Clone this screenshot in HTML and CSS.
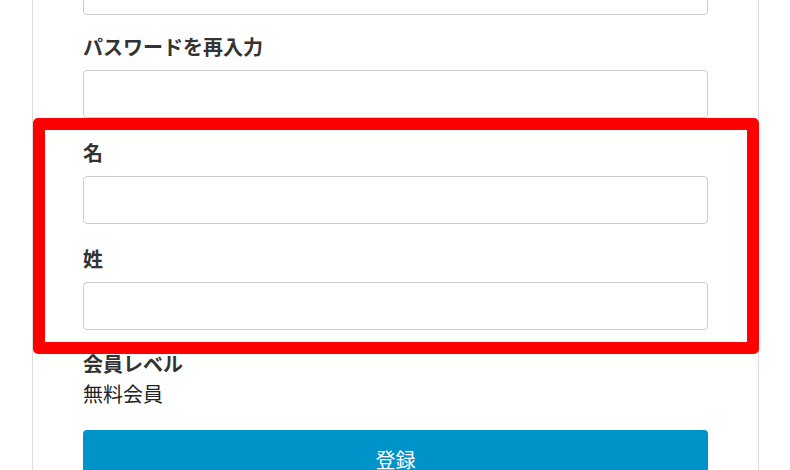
FILE: index.html
```html
<!DOCTYPE html>
<html lang="ja">
<head>
<meta charset="utf-8">
<link rel="stylesheet" href="styles.css">
</head>
<body>
<div class="page">
  <form class="card">
    <div class="group group-first">
      <input class="field" type="password">
    </div>
    <div class="group">
      <label class="label">パスワードを再入力</label>
      <input class="field" type="password">
    </div>
    <div class="group">
      <label class="label">名</label>
      <input class="field" type="text">
    </div>
    <div class="group group-last">
      <label class="label">姓</label>
      <input class="field" type="text">
    </div>
    <div class="group group-info">
      <div class="label">会員レベル</div>
      <div class="value">無料会員</div>
    </div>
    <button class="submit" type="button">登録</button>
  </form>
  <div class="highlight"></div>
</div>
</body>
</html>
```

FILE: styles.css
```css
html, body {
  margin: 0;
  padding: 0;
  background: #ffffff;
  overflow: hidden;
}

body {
  font-family: "Noto Sans CJK JP", "Noto Sans", sans-serif;
  color: #333333;
}

.page {
  position: relative;
  width: 790px;
  height: 470px;
  overflow: hidden;
}

.card {
  box-sizing: border-box;
  width: 727px;
  margin: -33px 0 0 32px;
  padding: 0 50px 40px;
  border-left: 1px solid #dcdcdc;
  border-right: 1px solid #dcdcdc;
  display: flex;
  flex-direction: column;
}

.group {
  display: flex;
  flex-direction: column;
  margin-bottom: 20px;
}

.group-first {
  margin-bottom: 17px;
}

.group-last {
  margin-bottom: 19px;
}

.label {
  display: block;
  font-size: 20px;
  line-height: 30px;
  font-weight: 700;
  color: #333333;
  margin-bottom: 8px;
}

.field {
  box-sizing: border-box;
  width: 100%;
  height: 48px;
  margin: 0;
  border: 1px solid #cccccc;
  border-radius: 4px;
  background: #ffffff;
  font: inherit;
}

.group-info {
  margin-bottom: 21px;
}

.group-info .label {
  margin-bottom: 0;
}

.value {
  font-size: 20px;
  line-height: 30px;
  color: #222222;
}

.submit {
  box-sizing: border-box;
  width: 100%;
  height: 60px;
  border: none;
  border-radius: 4px;
  background: #0093c9;
  color: #ffffff;
  font-family: inherit;
  font-size: 20px;
  line-height: 30px;
}

.highlight {
  position: absolute;
  left: 33px;
  top: 118px;
  width: 726px;
  height: 236px;
  box-sizing: border-box;
  border: 12px solid #ff0000;
  border-radius: 5px;
  pointer-events: none;
}
```
